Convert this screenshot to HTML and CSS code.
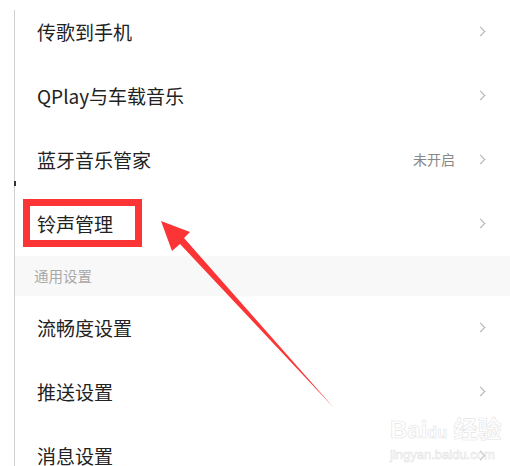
FILE: index.html
```html
<!DOCTYPE html>
<html lang="zh-CN">
<head>
    <meta charset="UTF-8">
    <meta name="viewport" content="width=device-width, initial-scale=1.0">
    <title>设置</title>
    <link rel="stylesheet" href="styles.css">
</head>
<body>
    <div class="page">
        <ul class="list">
            <li class="row"><span class="label">传歌到手机</span><span class="chev"></span></li>
            <li class="row"><span class="label">QPlay与车载音乐</span><span class="chev"></span></li>
            <li class="row"><span class="label">蓝牙音乐管家</span><span class="state">未开启</span><span class="chev"></span></li>
            <li class="row"><span class="label">铃声管理</span><span class="chev"></span></li>
            <li class="section">通用设置</li>
            <li class="row"><span class="label">流畅度设置</span><span class="chev"></span></li>
            <li class="row"><span class="label">推送设置</span><span class="chev"></span></li>
            <li class="row"><span class="label">消息设置</span><span class="chev"></span></li>
        </ul>

        <div class="watermark">
            <div class="wm-logo">Bai<span class="wm-paw">du</span> 经验</div>
            <div class="wm-url">jingyan.baidu.com</div>
        </div>

        <!-- annotation drawn on top of the screenshot -->
        <svg class="marks" width="510" height="466" viewBox="0 0 510 466">
            <rect x="14" y="181" width="2" height="5" fill="#333"/>
            <rect x="26.5" y="202.5" width="112" height="41" fill="none" stroke="#fb3535" stroke-width="7"/>
            <polygon points="161,221 190,232 184,238 334,408 180,244 172,251" fill="#fb3535"/>
        </svg>
    </div>
</body>
</html>
```
FILE: styles.css
```css
* {
    margin: 0;
    padding: 0;
    box-sizing: border-box;
    list-style: none;
}

body {
    font-family: "Noto Sans CJK SC", "Noto Sans", sans-serif;
    background: #fff;
    color: #222;
}

.page {
    position: relative;
    width: 510px;
    height: 466px;
    overflow: hidden;
    background: linear-gradient(#cfcfcf, #cfcfcf) 14px 10px / 1px 100% no-repeat;
}

.list {
    padding-left: 15px;
}

.row {
    height: 64px;
    display: flex;
    align-items: center;
    padding: 0 26px 2px 22px;
}

.label {
    flex: 1;
    font-size: 19px;
    line-height: 1;
    color: #222;
}

.state {
    font-size: 14px;
    line-height: 1;
    color: #888;
    margin-right: 22px;
}

.chev {
    width: 7px;
    height: 7px;
    border-top: 1.5px solid #b0b0b0;
    border-right: 1.5px solid #b0b0b0;
    transform: rotate(45deg);
}

.section {
    height: 40px;
    display: flex;
    align-items: center;
    padding: 0 0 2px 19px;
    background: #f8f8f8;
    font-size: 14.5px;
    color: #a8a8a8;
}

.watermark {
    position: absolute;
    left: 390px;
    top: 416px;
    color: transparent;
    -webkit-text-stroke: 0.6px #e4e4e4;
    font-family: "Liberation Sans", "Noto Sans CJK SC", sans-serif;
}

.wm-logo {
    font-size: 24px;
    font-weight: bold;
    line-height: 28px;
}

.wm-paw {
    font-size: 16px;
}

.wm-url {
    font-size: 13px;
    line-height: 16px;
}

.marks {
    position: absolute;
    top: 0;
    left: 0;
}
```
